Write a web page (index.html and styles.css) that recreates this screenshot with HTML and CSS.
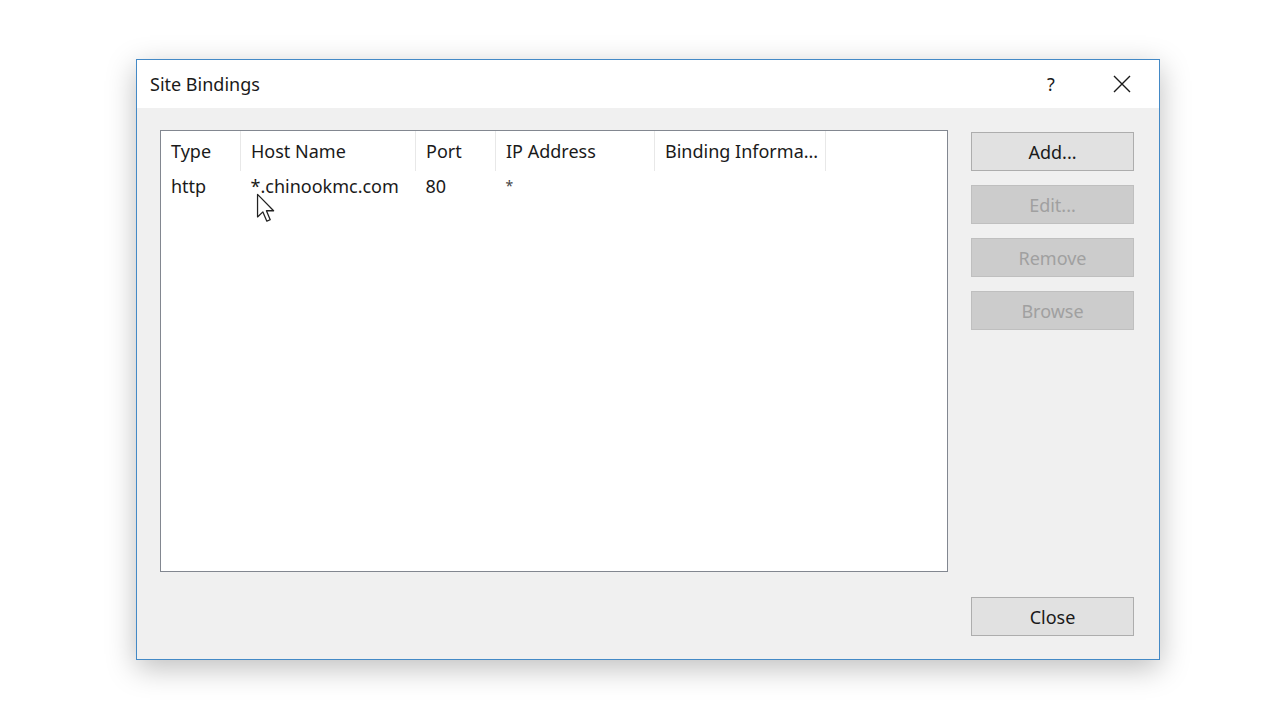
FILE: index.html
```html
<!DOCTYPE html>
<html lang="en">
<head>
    <meta charset="UTF-8">
    <title>Site Bindings</title>
    <link rel="stylesheet" href="styles.css">
</head>
<body>
    <div class="dialog">
        <div class="titlebar">
            <span class="title">Site Bindings</span>
            <span class="help">?</span>
            <span class="close-x">
                <svg width="18" height="18" viewBox="0 0 18 18"><path d="M1 1 L17 17 M17 1 L1 17" stroke="#1a1a1a" stroke-width="1.4" fill="none"/></svg>
            </span>
        </div>

        <div class="content">
            <div class="main">
                <div class="listbox">
                    <table class="bindings">
                        <thead>
                            <tr>
                                <th class="c-type">Type</th>
                                <th class="c-host">Host Name</th>
                                <th class="c-port">Port</th>
                                <th class="c-ip">IP Address</th>
                                <th class="c-info">Binding Informa...</th>
                                <th class="c-rest"></th>
                            </tr>
                        </thead>
                        <tbody>
                            <tr>
                                <td>http</td>
                                <td>*.chinookmc.com</td>
                                <td>80</td>
                                <td class="star">*</td>
                                <td></td>
                                <td></td>
                            </tr>
                        </tbody>
                    </table>
                </div>
                <div class="buttons">
                    <button class="btn">Add...</button>
                    <button class="btn" disabled>Edit...</button>
                    <button class="btn" disabled>Remove</button>
                    <button class="btn" disabled>Browse</button>
                </div>
            </div>
            <div class="footer">
                <button class="btn">Close</button>
            </div>
        </div>

        <!-- pointeur de souris -->
        <svg class="cursor" width="20" height="31" viewBox="0 0 14 22">
            <path d="M1 1 L1 17 L4.8 13.4 L7.6 20 L10 19 L7.3 12.6 L12.4 12.6 Z" fill="#fff" stroke="#222" stroke-width="0.9" stroke-linejoin="round"/>
        </svg>
    </div>
</body>
</html>
```

FILE: styles.css
```css
html {
    background: #fff;
}

body {
    margin: 0;
    padding: 59px 0 0 136px;
    min-height: 720px;
    box-sizing: border-box;
    font-family: 'Noto Sans', 'Open Sans', sans-serif;
    font-size: 18px;
    color: #1a1a1a;
}

.dialog {
    position: relative;
    box-sizing: border-box;
    width: 1024px;
    height: 601px;
    border: 1px solid #4389c6;
    background: #f0f0f0;
    box-shadow: 0 8px 28px rgba(0,0,0,0.26);
    display: flex;
    flex-direction: column;
}

.titlebar {
    height: 48px;
    background: #fff;
    display: flex;
    align-items: center;
    padding-left: 13px;
}

.title {
    flex: 1;
}

.help {
    width: 26px;
    text-align: center;
    margin-right: 49px;
}

.close-x {
    width: 18px;
    height: 18px;
    margin-right: 28px;
    display: flex;
}

.content {
    flex: 1;
    display: flex;
    flex-direction: column;
    padding: 22px 25px 23px 23px;
}

.main {
    display: flex;
    gap: 23px;
}

.listbox {
    box-sizing: border-box;
    width: 788px;
    height: 442px;
    background: #fff;
    border: 1px solid #828790;
}

.bindings {
    border-collapse: collapse;
    table-layout: fixed;
    width: 100%;
}

.bindings th,
.bindings td {
    text-align: left;
    font-weight: normal;
    padding: 0 10px;
    white-space: nowrap;
    overflow: hidden;
}

.bindings th {
    height: 40px;
    border-right: 1px solid #e8e8e8;
}

.bindings th.c-rest {
    border-right: none;
}

.bindings td {
    height: 30px;
    vertical-align: top;
    padding-top: 3px;
}

.bindings td.star {
    font-size: 14px;
    padding-top: 5px;
    color: #444;
}

.c-type { width: 59px; }
.c-host { width: 154px; }
.c-port { width: 59px; }
.c-ip { width: 138px; }
.c-info { width: 150px; }

.buttons {
    display: flex;
    flex-direction: column;
    gap: 14px;
    margin-top: 2px;
}

.btn {
    box-sizing: border-box;
    width: 163px;
    height: 39px;
    background: #e1e1e1;
    border: 1px solid #adadad;
    font-family: inherit;
    font-size: 18px;
    color: #1a1a1a;
    padding: 0;
}

.btn:disabled {
    background: #cccccc;
    border-color: #bfbfbf;
    color: #a0a0a0;
}

.footer {
    margin-top: auto;
    display: flex;
    justify-content: flex-end;
}

.cursor {
    position: absolute;
    left: 119px;
    top: 133px;
}
```
